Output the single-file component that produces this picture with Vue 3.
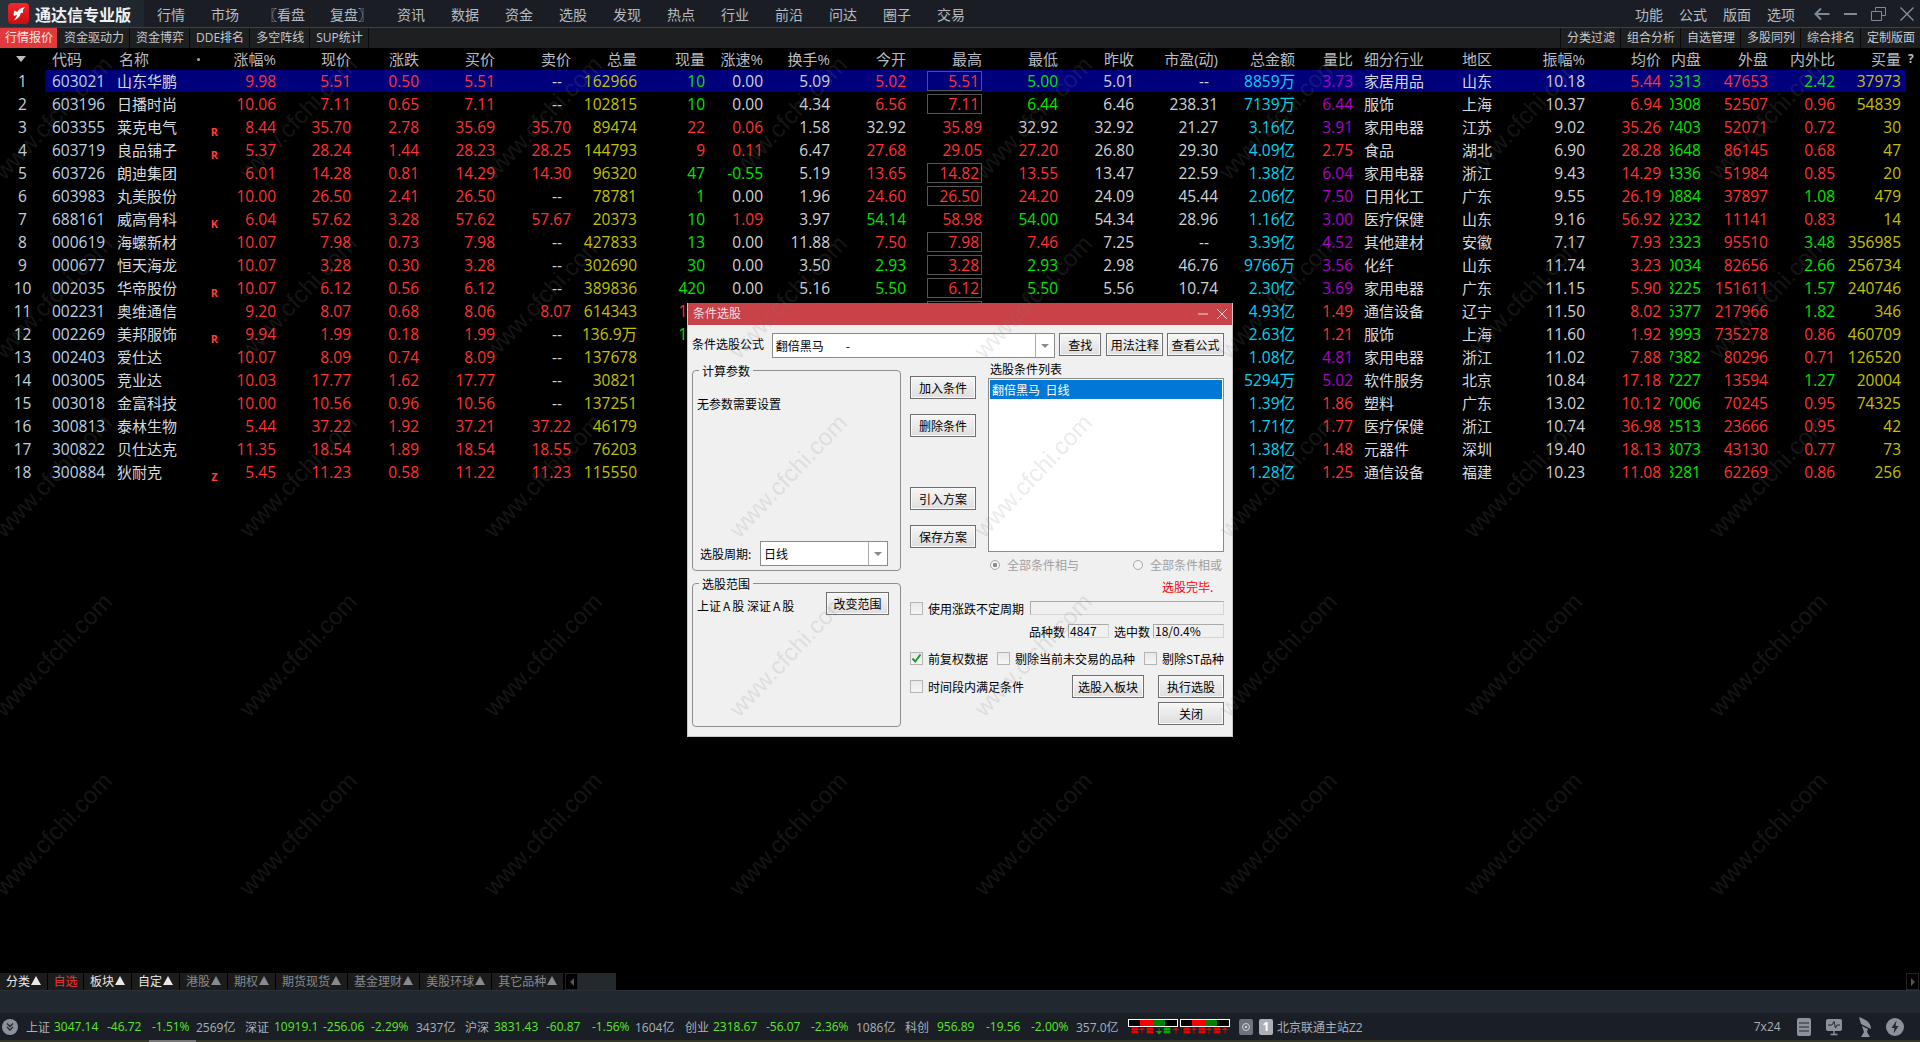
<script setup>
const menus = ['行情', '市场', '〖看盘', '复盘〗', '资讯', '数据', '资金', '选股', '发现', '热点', '行业', '前沿', '问达', '圈子', '交易']
const rightMenus = ['功能', '公式', '版面', '选项']
const leftTabs = ['资金驱动力', '资金博弈', 'DDE排名', '多空阵线', 'SUP统计']
const rightTabs = ['分类过滤', '组合分析', '自选管理', '多股同列', '综合排名', '定制版面']

const headers = [
  ['涨幅%'], ['现价'], ['涨跌'], ['买价'], ['卖价'], ['总量'], ['现量'], ['涨速%'], ['换手%'], ['今开'],
  ['最高'], ['最低'], ['昨收'], ['市盈(动)'], ['总金额'], ['量比'], ['细分行业', 'left industry'], ['地区', 'left'],
  ['振幅%'], ['均价', 'avg'], ['内盘'], ['外盘'], ['内外比'], ['买量']
]

// _ 表示被对话框挡住的格子, * 表示最高价带框
const rawRows = [
  '603021 山东华鹏 _ 9.98 5.51 0.50 5.51 -- 162966 10g 0.00 5.09 5.02 5.51* 5.00 5.01 -- 8859万 3.73 家居用品 山东 10.18 5.44 115313 47653 2.42 37973',
  '603196 日播时尚 _ 10.06 7.11 0.65 7.11 -- 102815 10g 0.00 4.34 6.56 7.11* 6.44 6.46 238.31 7139万 6.44 服饰 上海 10.37 6.94 50308 52507 0.96 54839',
  '603355 莱克电气 R 8.44 35.70 2.78 35.69 35.70 89474 22r 0.06 1.58 32.92 35.89 32.92 32.92 21.27 3.16亿 3.91 家用电器 江苏 9.02 35.26 37403 52071 0.72 30',
  '603719 良品铺子 R 5.37 28.24 1.44 28.23 28.25 144793 9r 0.11 6.47 27.68 29.05 27.20 26.80 29.30 4.09亿 2.75 食品 湖北 6.90 28.28 58648 86145 0.68 47',
  '603726 朗迪集团 _ 6.01 14.28 0.81 14.29 14.30 96320 47g -0.55 5.19 13.65 14.82* 13.55 13.47 22.59 1.38亿 6.04 家用电器 浙江 9.43 14.29 44336 51984 0.85 20',
  '603983 丸美股份 _ 10.00 26.50 2.41 26.50 -- 78781 1g 0.00 1.96 24.60 26.50* 24.20 24.09 45.44 2.06亿 7.50 日用化工 广东 9.55 26.19 40884 37897 1.08 479',
  '688161 威高骨科 K 6.04 57.62 3.28 57.62 57.67 20373 10g 1.09 3.97 54.14 58.98 54.00 54.34 28.96 1.16亿 3.00 医疗保健 山东 9.16 56.92 9232 11141 0.83 14',
  '000619 海螺新材 _ 10.07 7.98 0.73 7.98 -- 427833 13g 0.00 11.88 7.50 7.98* 7.46 7.25 -- 3.39亿 4.52 其他建材 安徽 7.17 7.93 332323 95510 3.48 356985',
  '000677 恒天海龙 _ 10.07 3.28 0.30 3.28 -- 302690 30g 0.00 3.50 2.93 3.28* 2.93 2.98 46.76 9766万 3.56 化纤 山东 11.74 3.23 220034 82656 2.66 256734',
  '002035 华帝股份 R 10.07 6.12 0.56 6.12 -- 389836 420g 0.00 5.16 5.50 6.12* 5.50 5.56 10.74 2.30亿 3.69 家用电器 广东 11.15 5.90 238225 151611 1.57 240746',
  '002231 奥维通信 _ 9.20 8.07 0.68 8.06 8.07 614343 100r _ _ _ 8.07* _ _ _ 4.93亿 1.49 通信设备 辽宁 11.50 8.02 396377 217966 1.82 346',
  '002269 美邦服饰 R 9.94 1.99 0.18 1.99 -- 136.9万 100g _ _ _ _ _ _ _ 2.63亿 1.21 服饰 上海 11.60 1.92 633993 735278 0.86 460709',
  '002403 爱仕达 _ 10.07 8.09 0.74 8.09 -- 137678 _ _ _ _ _ _ _ _ 1.08亿 4.81 家用电器 浙江 11.02 7.88 57382 80296 0.71 126520',
  '003005 竞业达 _ 10.03 17.77 1.62 17.77 -- 30821 _ _ _ _ _ _ _ _ 5294万 5.02 软件服务 北京 10.84 17.18 17227 13594 1.27 20004',
  '003018 金富科技 _ 10.00 10.56 0.96 10.56 -- 137251 _ _ _ _ _ _ _ _ 1.39亿 1.86 塑料 广东 13.02 10.12 67006 70245 0.95 74325',
  '300813 泰林生物 _ 5.44 37.22 1.92 37.21 37.22 46179 _ _ _ _ _ _ _ _ 1.71亿 1.77 医疗保健 浙江 10.74 36.98 22513 23666 0.95 42',
  '300822 贝仕达克 _ 11.35 18.54 1.89 18.54 18.55 76203 _ _ _ _ _ _ _ _ 1.38亿 1.48 元器件 深圳 19.40 18.13 33073 43130 0.77 73',
  '300884 狄耐克 Z 5.45 11.23 0.58 11.22 11.23 115550 _ _ _ _ _ _ _ _ 1.28亿 1.25 通信设备 福建 10.23 11.08 53281 62269 0.86 256'
]

const clean = (v) => (v === '_' ? '' : v)
const compare = (v, base) => {
  if (v > base) return 'red'
  if (v < base) return 'green'
  return 'white'
}

const rows = rawRows.map((line, i) => {
  const f = line.split(' ')
  const [code, name, flag, pct, price, chg, bid, ask, vol, cur, speed, turn, open, high, low, prev, pe, amt, ratio, ind, region, amp, avg, inner, outer, io, buy] = f
  const prevNum = Number(prev)
  const boxed = high.endsWith('*')
  const highText = clean(high.replace('*', ''))
  const curText = cur === '_' ? '' : cur.slice(0, -1)
  return {
    no: i + 1,
    code,
    name,
    flag: clean(flag),
    cells: [
      { text: pct, cls: 'red' },
      { text: price, cls: 'red' },
      { text: chg, cls: 'red' },
      { text: bid, cls: 'red' },
      { text: ask, cls: ask === '--' ? 'white dash-cell' : 'red' },
      { text: vol, cls: 'yellow' },
      { text: curText, cls: cur.endsWith('g') ? 'green' : 'red' },
      { text: clean(speed), cls: compare(Number(speed), 0) },
      { text: clean(turn), cls: 'white' },
      { text: clean(open), cls: compare(Number(open), prevNum) },
      { text: highText, cls: 'red', box: boxed },
      { text: clean(low), cls: compare(Number(low), prevNum) },
      { text: clean(prev), cls: 'white' },
      { text: clean(pe), cls: pe === '--' ? 'white dash-cell' : 'white' },
      { text: amt, cls: 'cyan' },
      { text: ratio, cls: Number(ratio) >= 3 ? 'purple' : 'red' },
      { text: ind, cls: 'left industry name-text' },
      { text: region, cls: 'left name-text' },
      { text: amp, cls: 'white' },
      { text: avg, cls: 'red avg' },
      { text: inner, cls: 'green clip' },
      { text: outer, cls: 'red' },
      { text: io, cls: Number(io) >= 1 ? 'green' : 'red' },
      { text: buy, cls: 'yellow' }
    ]
  }
})

const bottomTabs = [
  { name: '分类', cls: 'on', arrow: true },
  { name: '自选', cls: 'current', arrow: false },
  { name: '板块', cls: 'on', arrow: true },
  { name: '自定', cls: 'on', arrow: true },
  { name: '港股', arrow: true },
  { name: '期权', arrow: true },
  { name: '期货现货', arrow: true },
  { name: '基金理财', arrow: true },
  { name: '美股环球', arrow: true },
  { name: '其它品种', arrow: true }
]

const indices = [
  ['上证', '3047.14', '-46.72', '-1.51%', '2569亿'],
  ['深证', '10919.1', '-256.06', '-2.29%', '3437亿'],
  ['沪深', '3831.43', '-60.87', '-1.56%', '1604亿'],
  ['创业', '2318.67', '-56.07', '-2.36%', '1086亿'],
  ['科创', '956.89', '-19.56', '-2.00%', '357.0亿']
]

const marks = []
for (const y of [118, 297, 476, 655, 834]) {
  for (let k = 0; k < 8; k++) {
    marks.push({ x: 53 + 245 * k, y })
  }
}
</script>

<template>
  <div class="app">
    <header class="topbar">
      <div class="brand">
        <svg class="logo" width="21" height="21" viewBox="0 0 21 21">
          <defs>
            <linearGradient id="logoRed" x1="0" y1="0" x2="0" y2="1">
              <stop offset="0" stop-color="#f5262a" />
              <stop offset="1" stop-color="#c90d12" />
            </linearGradient>
          </defs>
          <rect width="21" height="21" rx="4" fill="url(#logoRed)" />
          <path d="M17 4 C13 4.5 10.5 6.5 9.2 9 L6.5 7.6 C5.6 9.8 5.4 11.6 6 13 L9 11.8 C8.6 13.6 7.6 15.4 5.6 17.4 C10.6 15.8 12.6 12.6 12.6 9.8 L15 10 C14.4 8.2 15 5.8 17 4 Z" fill="#fff" />
        </svg>
        <span class="brand-name">通达信专业版</span>
      </div>
      <nav class="menu">
        <span v-for="m in menus" :key="m" class="menu-item">{{ m }}</span>
      </nav>
      <nav class="menu-right">
        <span v-for="m in rightMenus" :key="m">{{ m }}</span>
      </nav>
      <div class="win-icons">
        <svg width="16" height="14" viewBox="0 0 16 14"><path d="M7 1.5 L1.5 7 L7 12.5 M1.5 7 H15.5" fill="none" stroke="#7f8a96" stroke-width="2" /></svg>
        <svg width="13" height="14" viewBox="0 0 13 14"><path d="M0 7 H13" stroke="#7f8a96" stroke-width="2" /></svg>
        <svg width="15" height="14" viewBox="0 0 15 14"><path d="M4.5 3.5 V0.5 H14.5 V8.5 H11 M0.5 4.5 H10.5 V13.5 H0.5 Z" fill="none" stroke="#7f8a96" /></svg>
        <svg width="14" height="14" viewBox="0 0 14 14"><path d="M0.5 0.5 L13.5 13.5 M13.5 0.5 L0.5 13.5" stroke="#8c959f" stroke-width="1.2" /></svg>
      </div>
    </header>

    <div class="tabbar">
      <span class="tab tab-active">行情报价</span>
      <span v-for="t in leftTabs" :key="t" class="tab">{{ t }}</span>
      <div class="tab-fill"></div>
      <span v-for="t in rightTabs" :key="t" class="tab tab-right">{{ t }}</span>
    </div>

    <main class="quotes">
      <div class="row head">
        <div class="cell no"><i class="sort"></i></div>
        <div class="cell left code-head">代码</div>
        <div class="cell left name-head">名称<i class="dot"></i></div>
        <div class="cell"></div>
        <div v-for="h in headers" :key="h[0]" class="cell" :class="h[1]">{{ h[0] }}</div>
        <div class="cell left help">?</div>
      </div>
      <div v-for="row in rows" :key="row.code" class="row" :class="{ selected: row.no === 1 }">
        <div class="cell no">{{ row.no }}</div>
        <div class="cell left code">{{ row.code }}</div>
        <div class="cell left name">{{ row.name }}</div>
        <div class="cell flag">{{ row.flag }}</div>
        <div v-for="(c, i) in row.cells" :key="i" class="cell" :class="c.cls">
          <span v-if="c.box" class="box">{{ c.text }}</span>
          <template v-else>{{ c.text }}</template>
        </div>
        <div class="cell"></div>
      </div>
    </main>

    <div class="bottom-tabs">
      <span v-for="t in bottomTabs" :key="t.name" class="btab" :class="t.cls">{{ t.name }}<i v-if="t.arrow" class="up"></i></span>
      <span class="scroll-btn"><i class="tri-left"></i></span>
      <span class="scroll-thumb"></span>
      <span class="scroll-btn scroll-end"><i class="tri-right"></i></span>
    </div>
    <div class="spacer-bar"></div>

    <footer class="status">
      <span class="fold">
        <svg width="16" height="16" viewBox="0 0 16 16">
          <circle cx="8" cy="8" r="8" fill="#8b929a" />
          <path d="M5 4.5 L8 7.5 L11 4.5 M5 8 L8 11 L11 8" fill="none" stroke="#23282e" stroke-width="1.3" />
        </svg>
      </span>
      <div class="indices">
        <template v-for="idx in indices" :key="idx[0]">
          <span class="idx-label">{{ idx[0] }}</span>
          <span class="idx-num">{{ idx[1] }}</span>
          <span class="idx-num">{{ idx[2] }}</span>
          <span class="idx-num">{{ idx[3] }}</span>
          <span class="idx-label">{{ idx[4] }}</span>
        </template>
      </div>
      <svg class="signal" width="102" height="15" viewBox="0 0 102 15">
        <rect x="0.5" y="0.5" width="49" height="7" fill="#000" stroke="#fff" />
        <rect x="12" y="1" width="13" height="6" fill="#f00" />
        <rect x="25" y="1" width="12" height="6" fill="#008000" />
        <rect x="52.5" y="0.5" width="49" height="7" fill="#000" stroke="#fff" />
        <rect x="64" y="1" width="13" height="6" fill="#f00" />
        <rect x="77" y="1" width="12" height="6" fill="#008000" />
        <path d="M4 9 h6 v2 h-6 z M4 12 h6 v2 h-6 z M14 14 v-5 M11 11 l3 -2 l3 2 M19 9 h6 v2 h-6 z M19 12 h6 v2 h-6 z M48 15 v-6 M45 11 l3 -2 l3 2 M56 9 h6 v2 h-6 z M56 12 h6 v2 h-6 z M66 15 v-6 M63 11 l3 -2 l3 2 M71 9 h6 v2 h-6 z M71 12 h6 v2 h-6 z M81 15 v-6 M78 11 l3 -2 l3 2 M86 9 h6 v2 h-6 z M86 12 h6 v2 h-6 z M97 15 v-6 M94 11 l3 -2 l3 2" fill="#e00" stroke="#e00" stroke-width="0.8" />
        <path d="M31 15 v-6 M28 12 l3 3 l3 -3 M36 9 h6 v2 h-6 z M36 12 h6 v2 h-6 z" fill="#0a0" stroke="#0a0" stroke-width="0.8" />
      </svg>
      <span class="net-box">
        <svg width="14" height="16" viewBox="0 0 14 16">
          <rect width="14" height="16" rx="2" fill="#6d737b" />
          <circle cx="7" cy="8" r="3.5" fill="none" stroke="#d0d4d8" />
          <circle cx="7" cy="8" r="1.2" fill="#d0d4d8" />
        </svg>
      </span>
      <span class="net-one">1</span>
      <span class="server">北京联通主站Z2</span>
      <span class="clock">7x24</span>
      <div class="status-icons">
        <svg width="14" height="18" viewBox="0 0 14 18">
          <rect width="14" height="18" rx="2" fill="#8b929a" />
          <path d="M2 5 H12 M2 9 H12 M2 13 H12" stroke="#23282e" />
        </svg>
        <svg width="16" height="18" viewBox="0 0 16 18">
          <rect y="1" width="16" height="12" rx="2" fill="#8b929a" />
          <path d="M2 7 H6 L8 3.5 L9.5 10 L11 7 H14" fill="none" stroke="#23282e" />
          <path d="M8 13 V16 M4.5 16.5 H11.5" stroke="#8b929a" stroke-width="1.5" />
        </svg>
        <svg width="13" height="20" viewBox="0 0 13 20">
          <path d="M1 0 C10 3 13 7 13 12 L3 7 Z M4 9 L10 12 L9 15 L12 20 H3 L6 15 Z" fill="#8b929a" />
        </svg>
        <svg width="18" height="18" viewBox="0 0 18 18">
          <circle cx="9" cy="9" r="9" fill="#8b929a" />
          <path d="M10.5 2.5 L5.5 10 H8.5 L7.5 15.5 L12.5 8 H9.5 Z" fill="#23282e" />
        </svg>
      </div>
    </footer>
    <div class="foot-line"><span class="foot-thumb"></span></div>

    <section class="dialog">
      <div class="dialog-title">
        <span class="dialog-name">条件选股</span>
        <svg class="dlg-min" width="10" height="2" viewBox="0 0 10 2"><path d="M0 1 H10" stroke="#f2d5d6" /></svg>
        <svg class="dlg-close" width="10" height="10" viewBox="0 0 10 10"><path d="M0 0 L10 10 M10 0 L0 10" stroke="#f2d5d6" /></svg>
      </div>
      <div class="dialog-body">
        <div class="formula-row">
          <label class="formula-label">条件选股公式</label>
          <div class="combo formula-combo">
            <span class="combo-text">翻倍黑马<em class="dash">-</em></span>
            <span class="combo-arrow"><i></i></span>
          </div>
          <button class="btn find">查找</button>
          <button class="btn usage">用法注释</button>
          <button class="btn view">查看公式</button>
        </div>

        <div class="dialog-main">
          <div class="col-left">
            <div class="group params">
              <span class="legend">计算参数</span>
              <p class="no-param">无参数需要设置</p>
              <div class="period">
                <span class="period-label">选股周期:</span>
                <div class="combo period-combo">
                  <span class="combo-text">日线</span>
                  <span class="combo-arrow"><i></i></span>
                </div>
              </div>
            </div>
            <div class="group scope">
              <span class="legend">选股范围</span>
              <span class="scope-text">上证<i class="wide-a">A</i>股 深证<i class="wide-a">A</i>股</span>
              <button class="btn scope-btn">改变范围</button>
            </div>
          </div>

          <div class="col-rest">
            <div class="col-upper">
              <div class="col-mid">
                <button class="btn mid-btn">加入条件</button>
                <button class="btn mid-btn">删除条件</button>
                <button class="btn mid-btn spaced">引入方案</button>
                <button class="btn mid-btn">保存方案</button>
              </div>
              <div class="col-right">
                <div class="list-title">选股条件列表</div>
                <div class="list-box">
                  <div class="list-item">翻倍黑马&nbsp;&nbsp;日线</div>
                </div>
                <div class="radios">
                  <span class="radio-item"><i class="radio checked"></i>全部条件相与</span>
                  <span class="radio-item"><i class="radio"></i>全部条件相或</span>
                </div>
                <div class="done">选股完毕.</div>
              </div>
            </div>

            <div class="opt-row first">
              <label class="check"><i class="box-check"></i>使用涨跌不定周期</label>
              <span class="field period-field"></span>
            </div>
            <div class="count-row">
              <span>品种数</span><span class="field count-a">4847</span>
              <span class="count-label">选中数</span><span class="field count-b">18/0.4%</span>
            </div>
            <div class="check-row">
              <label class="check">
                <i class="box-check">
                  <svg width="11" height="11" viewBox="0 0 11 11"><path d="M1.5 5.5 L4.3 8.5 L9.5 1.5" fill="none" stroke="#1d9a2a" stroke-width="2" /></svg>
                </i>前复权数据
              </label>
              <label class="check"><i class="box-check"></i>剔除当前未交易的品种</label>
              <label class="check"><i class="box-check"></i>剔除ST品种</label>
            </div>
            <div class="action-row">
              <label class="check"><i class="box-check"></i>时间段内满足条件</label>
              <button class="btn to-block">选股入板块</button>
              <button class="btn run">执行选股</button>
            </div>
            <button class="btn close-btn">关闭</button>
          </div>
        </div>
      </div>
    </section>

    <div class="watermarks">
      <span v-for="m in marks" :key="m.x + '-' + m.y" class="mark" :style="{ left: m.x + 'px', top: m.y + 'px' }">www.cfchi.com</span>
    </div>
  </div>
</template>

<style>
html,
body {
  margin: 0;
  background: #000;
}
</style>

<style scoped>
.app {
  position: relative;
  display: flex;
  flex-direction: column;
  width: 1920px;
  height: 1042px;
  overflow: hidden;
  background: #000;
  font-family: "Open Sans", "Noto Sans CJK SC", sans-serif;
  color: #ccc;
}

i,
em {
  font-style: normal;
}

/* top menu */
.topbar {
  display: flex;
  align-items: center;
  flex: none;
  height: 27px;
  border-bottom: 1px solid #3a4149;
  background: #1a1e24;
  color: #b4bbc3;
  font-size: 14px;
}

.brand {
  display: flex;
  align-items: center;
  width: 144px;
  height: 100%;
  padding-left: 8px;
  box-sizing: border-box;
  background: linear-gradient(to right, #2a313a, #20262d);
}

.logo {
  flex: none;
}

.brand-name {
  margin-left: 6px;
  color: #f0f0f0;
  font-size: 16px;
  font-weight: 700;
  white-space: nowrap;
}

.menu {
  display: flex;
  gap: 26px;
  margin-left: 13px;
}

.menu-item:nth-child(3) {
  margin-left: -2px;
}

.menu-item:nth-child(4),
.menu-item:nth-child(5) {
  margin-left: -1px;
}

.menu-right {
  display: flex;
  gap: 16px;
  margin-left: auto;
}

.win-icons {
  display: flex;
  align-items: center;
  gap: 14px;
  margin-left: 19px;
  margin-right: 6px;
}

/* second row tabs */
.tabbar {
  display: flex;
  flex: none;
  height: 20px;
  background: #1e1f21;
  font-size: 12px;
  line-height: 20px;
  color: #c6c9cc;
}

.tab {
  padding: 0 5px 0 6px;
  border-right: 1px solid #0a0a0a;
  white-space: nowrap;
}

.tab-active {
  width: 58px;
  padding: 0 0 0 5px;
  box-sizing: border-box;
  background: #e0393b;
  color: #fbe3e3;
}

.tab-fill {
  flex: 1;
}

.tab-right {
  width: 60px;
  box-sizing: border-box;
  border-right: 0;
  border-left: 1px solid #0a0a0a;
}

/* quote table */
.quotes {
  flex: 1;
  font-size: 15.5px;
}

.row {
  display: grid;
  grid-template-columns: 45px 65px 95px 19px 52px 75px 68px 76px 76px 66px 68px 58px 67px 76px 76px 76px 76px 84px 77px 58px 109px 63px 60px 85px 31px 67px 67px 66px 19px;
  height: 23px;
  line-height: 22px;
}

.row.head {
  height: 22px;
  color: #b8bcc2;
  font-size: 15px;
}

.row.selected {
  background: linear-gradient(to right, transparent 45px, #00007c 45px, #00007c 1906px, transparent 1906px) no-repeat;
  background-size: 100% 22px;
}

.cell {
  display: flex;
  justify-content: flex-end;
  align-items: center;
  height: 22px;
  white-space: nowrap;
}

.left {
  justify-content: flex-start;
}

.no {
  justify-content: center;
  color: #c6d0d8;
}

.code {
  padding-left: 7px;
  color: #bcd3e6;
}

.code-head {
  padding-left: 7px;
}

.name,
.name-head {
  padding-left: 7px;
}

.name,
.name-text {
  color: #d4d9de;
  font-size: 15px;
}

.name-head {
  position: relative;
  padding-left: 9px;
}

.dot {
  position: absolute;
  left: 87px;
  top: 10px;
  width: 3px;
  height: 3px;
  border-radius: 50%;
  background: #aaa;
}

.sort {
  width: 0;
  height: 0;
  margin-right: 4px;
  border-left: 5px solid transparent;
  border-right: 5px solid transparent;
  border-top: 6px solid #b8bcc2;
}

.flag {
  justify-content: center;
  padding-top: 5px;
  color: #ff3c3c;
  font-size: 11px;
  font-weight: 700;
}

.industry {
  padding-left: 11px;
}

.avg {
  padding-right: 9px;
}

.clip {
  overflow: hidden;
}

.dash-cell {
  padding-right: 9px;
}

.help {
  padding-left: 7px;
  font-size: 12px;
  font-weight: 700;
}

.box {
  display: flex;
  align-items: center;
  justify-content: flex-end;
  width: 55px;
  height: 20px;
  padding-right: 2px;
  box-sizing: border-box;
  border: 1px solid #555;
}

.red {
  color: #ff3232;
}

.green {
  color: #00e600;
}

.white {
  color: #d0d3d6;
}

.yellow {
  color: #c2c200;
}

.cyan {
  color: #00d4f0;
}

.purple {
  color: #b000c8;
}

/* bottom tabs */
.bottom-tabs {
  display: flex;
  gap: 1px;
  flex: none;
  height: 17px;
  font-size: 12px;
  line-height: 17px;
  border-bottom: 1px solid #2a3038;
}

.btab {
  padding: 0 6px;
  background: #1c1c1c;
  color: #858a8f;
  white-space: nowrap;
}

.btab.on {
  color: #e8e8e8;
}

.btab.current {
  padding: 0 5.5px;
  color: #ee3333;
}

.up {
  display: inline-block;
  width: 0;
  height: 0;
  margin-left: 1px;
  vertical-align: 1px;
  border-left: 5px solid transparent;
  border-right: 5px solid transparent;
  border-bottom: 9px solid currentColor;
}

.scroll-btn {
  display: flex;
  align-items: center;
  justify-content: center;
  width: 13px;
  margin-left: 1px;
  border: 1px solid #222;
  box-sizing: border-box;
}

.tri-left {
  border-top: 4px solid transparent;
  border-bottom: 4px solid transparent;
  border-right: 4px solid #555;
}

.tri-right {
  border-top: 4px solid transparent;
  border-bottom: 4px solid transparent;
  border-left: 4px solid #555;
}

.scroll-thumb {
  width: 38px;
  margin-left: -1px;
  background: #24292e;
}

.scroll-end {
  margin-left: auto;
  margin-right: 1px;
}

.spacer-bar {
  flex: none;
  height: 22px;
  background: #222830;
}

/* status bar */
.status {
  display: flex;
  align-items: center;
  flex: none;
  height: 27px;
  background: #1a1f26;
  font-size: 12px;
  color: #a9b0b8;
}

.fold {
  display: flex;
  flex: none;
  width: 26px;
  padding-left: 2px;
  box-sizing: border-box;
}

.indices {
  display: grid;
  grid-template-columns: 28px 53px 45px 44px 49px 29px 49px 48px 45px 49px 29px 52px 46px 43px 50px 28px 53px 45px 45px 49px 32px 49px 45px 45px 52px;
  flex: none;
}

.idx-num {
  color: #5ee628;
}

.idx-label {
  white-space: nowrap;
}

.signal {
  flex: none;
}

.net-box {
  display: flex;
  margin-left: 9px;
}

.net-one {
  width: 14px;
  height: 16px;
  margin-left: 6px;
  border-radius: 2px;
  background: #aab0b6;
  color: #fff;
  font-weight: 700;
  line-height: 16px;
  text-align: center;
}

.server {
  margin-left: 4px;
  white-space: nowrap;
}

.clock {
  margin-left: 391px;
}

.status-icons {
  display: flex;
  align-items: center;
  gap: 15.5px;
  margin-left: 16px;
}

.foot-line {
  flex: none;
  height: 2px;
  background: #35362a;
}

.foot-thumb {
  display: block;
  width: 47px;
  height: 2px;
  margin-left: 149px;
  background: #777;
}

/* dialog */
.dialog {
  position: absolute;
  left: 687px;
  top: 303px;
  width: 546px;
  height: 434px;
  box-sizing: border-box;
  border: 1px solid #c6c6c6;
  border-top: 0;
  background: #f0f0f0;
  color: #000;
  font-family: "Noto Sans CJK SC", "Open Sans", sans-serif;
  font-size: 12px;
}

.dialog-title {
  display: flex;
  align-items: center;
  height: 22px;
  padding: 0 5px;
  background: #c94248;
  color: #f6dfe0;
}

.dialog-name {
  margin-top: -3px;
}

.dlg-min {
  margin-left: auto;
}

.dlg-close {
  margin-left: 9px;
}

.dialog-body {
  padding: 8px 8px 0 4px;
}

.btn {
  display: block;
  height: 23px;
  padding: 0;
  box-sizing: border-box;
  border: 1px solid #6f6f6f;
  box-shadow: inset 0 0 0 1px #fafafa;
  background: linear-gradient(#f6f6f6, #dedede);
  color: #000;
  font: inherit;
}

.formula-row {
  display: flex;
  align-items: flex-start;
  height: 25px;
}

.formula-label {
  width: 80px;
  line-height: 22px;
}

.combo {
  display: flex;
  height: 25px;
  box-sizing: border-box;
  border: 1px solid #8b8b8b;
  background: #fff;
}

.combo-text {
  flex: 1;
  padding-left: 3px;
  line-height: 23px;
}

.combo-arrow {
  display: flex;
  align-items: center;
  justify-content: center;
  width: 18px;
  border-left: 1px solid #ababab;
}

.combo-arrow i {
  border-left: 4px solid transparent;
  border-right: 4px solid transparent;
  border-top: 4px solid #8a8a8a;
}

.formula-combo {
  width: 284px;
}

.dash {
  margin-left: 22px;
}

.find {
  width: 42px;
  margin-left: 4px;
}

.usage {
  width: 57px;
  margin-left: 5px;
}

.view {
  width: 57px;
  margin-left: 4px;
}

.dialog-main {
  display: flex;
  margin-top: 4px;
}

.col-left {
  flex: none;
  width: 209px;
  padding-top: 8px;
}

.group {
  position: relative;
  box-sizing: border-box;
  border: 1px solid #8e8e8e;
  border-radius: 4px;
}

.legend {
  position: absolute;
  left: 6px;
  top: -7px;
  padding: 0 3px;
  background: #f0f0f0;
  line-height: 14px;
}

.params {
  display: flex;
  flex-direction: column;
  height: 201px;
  padding: 24px 12px 4px 4px;
}

.no-param {
  margin: 0;
  line-height: 18px;
}

.period {
  display: flex;
  align-items: center;
  margin-top: auto;
  padding-left: 3px;
}

.period-label {
  width: 60px;
}

.period-combo {
  width: 128px;
}

.scope {
  display: flex;
  align-items: flex-start;
  height: 144px;
  margin-top: 12px;
  padding: 8px 11px 0 4px;
}

.scope-text {
  line-height: 28px;
}

.wide-a {
  padding: 0 2px;
}

.scope-btn {
  width: 63px;
  margin-left: auto;
}

.col-rest {
  flex: none;
  width: 314px;
  margin-left: 9px;
}

.col-upper {
  display: flex;
}

.col-mid {
  flex: none;
  width: 66px;
  padding-top: 14px;
}

.mid-btn {
  width: 66px;
  margin-top: 15px;
}

.mid-btn:first-child {
  margin-top: 0;
}

.mid-btn.spaced {
  margin-top: 50px;
}

.col-right {
  flex: none;
  width: 236px;
  margin-left: 12px;
}

.list-title {
  height: 16px;
  padding-left: 2px;
  line-height: 14px;
}

.list-box {
  height: 174px;
  padding: 1px;
  box-sizing: border-box;
  border: 1px solid #8b8b8b;
  background: #fff;
}

.list-item {
  height: 19px;
  padding-left: 2px;
  background: #0078d7;
  color: #fff;
  line-height: 19px;
}

.radios {
  display: flex;
  height: 16px;
  margin-top: 5px;
  padding-left: 2px;
  color: #a0a0a0;
  line-height: 16px;
}

.radio-item {
  display: flex;
  align-items: center;
  flex: none;
  white-space: nowrap;
}

.radio-item:first-child {
  width: 143px;
}

.radio {
  flex: none;
  width: 10px;
  height: 10px;
  margin-right: 7px;
  box-sizing: border-box;
  border: 1px solid #a8a8a8;
  border-radius: 50%;
  background: #f4f4f4;
}

.radio.checked {
  background: radial-gradient(circle, #8d8d8d 0 2px, #f4f4f4 2.5px);
}

.done {
  height: 16px;
  margin-top: 6px;
  padding-left: 174px;
  color: #f00;
  line-height: 16px;
}

.check {
  display: flex;
  align-items: center;
  white-space: nowrap;
}

.box-check {
  display: flex;
  align-items: center;
  justify-content: center;
  flex: none;
  width: 13px;
  height: 13px;
  margin-right: 5px;
  box-sizing: border-box;
  border: 1px solid #b4b4b4;
  background: linear-gradient(#e8e8e8, #f6f6f6);
}

.opt-row {
  display: flex;
  align-items: center;
  justify-content: space-between;
  height: 14px;
  margin-top: 6px;
}

.field {
  display: block;
  height: 14px;
  box-sizing: border-box;
  border: 1px solid #d4d4d4;
  border-top-color: #a9a9a9;
  border-left-color: #a9a9a9;
  background: #f0f0f0;
  line-height: 12px;
  padding-left: 1px;
}

.period-field {
  width: 194px;
}

.count-row {
  display: flex;
  align-items: center;
  height: 14px;
  margin-top: 9px;
  padding-left: 119px;
  white-space: nowrap;
}

.count-a {
  width: 41px;
  margin-left: 3px;
}

.count-label {
  margin-left: 5px;
}

.count-b {
  width: 71px;
  margin-left: 3px;
}

.check-row {
  display: grid;
  grid-template-columns: 87px 147px 80px;
  align-items: center;
  height: 16px;
  margin-top: 12px;
}

.action-row {
  display: flex;
  align-items: center;
  margin-top: 9px;
}

.to-block {
  width: 72px;
  margin-left: auto;
}

.run {
  width: 66px;
  margin-left: 14px;
}

.close-btn {
  width: 66px;
  margin-top: 4px;
  margin-left: auto;
}

/* watermark */
.watermarks {
  position: absolute;
  inset: 0;
  pointer-events: none;
}

.mark {
  position: absolute;
  transform: translate(-50%, -50%) rotate(-46.5deg);
  color: rgba(128, 128, 128, 0.18);
  font-family: "Liberation Sans", sans-serif;
  font-size: 24px;
  line-height: 28px;
  white-space: nowrap;
}
</style>
